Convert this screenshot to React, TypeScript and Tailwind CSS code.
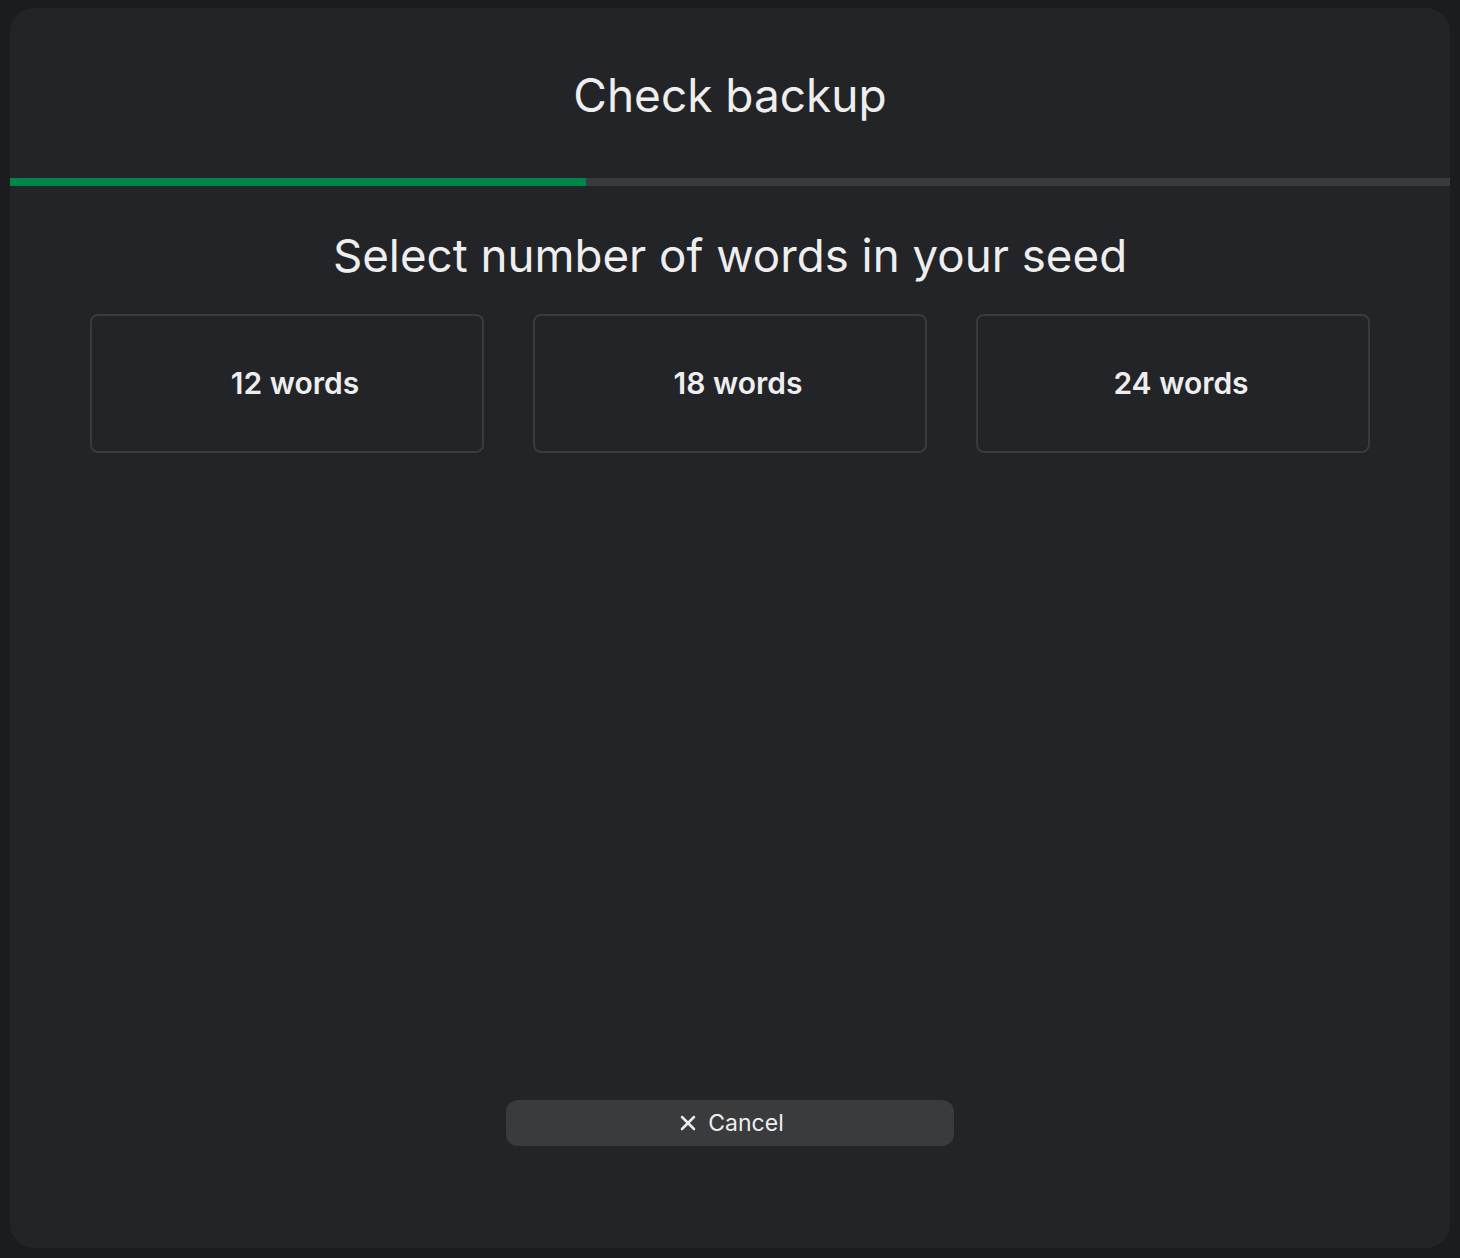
import { X } from 'lucide-react'

const options = ['12 words', '18 words', '24 words']

export default function App() {
  return (
    <div
      className="h-[1258px] w-[1460px] bg-[#1b1c1e] pt-2 pl-[10px]"
      style={{ fontFamily: 'Inter, "Noto Sans", sans-serif' }}
    >
      <div className="flex h-[1240px] w-[1440px] flex-col rounded-[24px] bg-[#232427]">
        <div className="flex h-[170px] items-center justify-center pt-1">
          <h1 className="text-[46px] font-normal text-[#eeeeef]">Check backup</h1>
        </div>
        <div className="h-2 w-full bg-[#3a3b3d]">
          <div className="h-full w-[40%] bg-[#00854a]" />
        </div>

        <div className="flex flex-1 flex-col px-20">
          <h2 className="mt-[42px] text-center text-[45.7px] leading-[56px] font-normal text-[#eeeeef]">
            Select number of words in your seed
          </h2>
          <div className="mt-[30px] grid grid-cols-3 gap-[49px]">
            {options.map((o) => (
              <button
                key={o}
                className="flex h-[139px] items-center justify-center rounded-lg border-2 border-[#3a3b3d] pl-4 text-[30px] font-semibold text-[#eeeeef]"
              >
                {o}
              </button>
            ))}
          </div>

          <div className="mt-auto mb-[102px] flex justify-center">
            <button className="flex h-[46px] w-[448px] items-center justify-center gap-2 rounded-xl bg-[#3a3b3d] text-[23px] text-[#eeeeef]">
              <X className="h-6 w-6" strokeWidth={2.5} />
              Cancel
            </button>
          </div>
        </div>
      </div>
    </div>
  )
}
